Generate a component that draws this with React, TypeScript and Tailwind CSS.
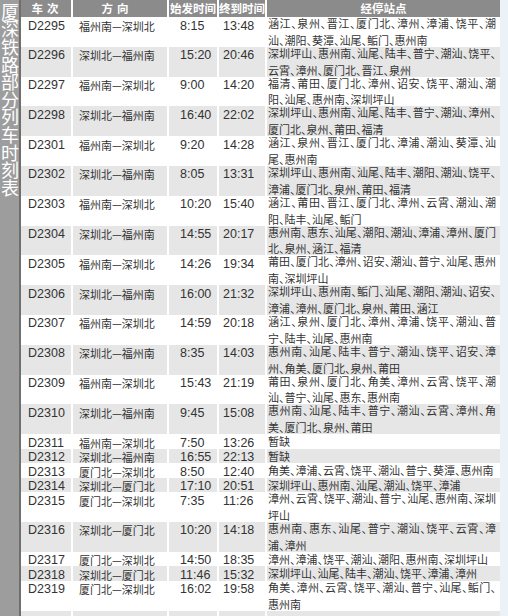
import React from "react";

type Train = [string, string, string, string, string[]];

const trains: Train[] = [
  ["D2295", "福州南—深圳北", "8:15", "13:48", ["涵江、泉州、晋江、厦门北、漳州、漳浦、饶平、潮", "汕、潮阳、葵潭、汕尾、鲘门、惠州南"]],
  ["D2296", "深圳北—福州南", "15:20", "20:46", ["深圳坪山、惠州南、汕尾、陆丰、普宁、潮汕、饶平、", "云霄、漳州、厦门北、晋江、泉州"]],
  ["D2297", "福州南—深圳北", "9:00", "14:20", ["福清、莆田、厦门北、漳州、诏安、饶平、潮汕、潮", "阳、汕尾、惠州南、深圳坪山"]],
  ["D2298", "深圳北—福州南", "16:40", "22:02", ["深圳坪山、惠州南、汕尾、陆丰、普宁、潮汕、漳州、", "厦门北、泉州、莆田、福清"]],
  ["D2301", "福州南—深圳北", "9:20", "14:28", ["涵江、泉州、晋江、厦门北、漳浦、潮汕、葵潭、汕", "尾、惠州南"]],
  ["D2302", "深圳北—福州南", "8:05", "13:31", ["深圳坪山、惠州南、汕尾、陆丰、潮阳、潮汕、饶平、", "漳浦、厦门北、泉州、莆田、福清"]],
  ["D2303", "福州南—深圳北", "10:20", "15:40", ["涵江、莆田、晋江、厦门北、漳州、云霄、潮汕、潮", "阳、陆丰、汕尾、鲘门"]],
  ["D2304", "深圳北—福州南", "14:55", "20:17", ["惠州南、惠东、汕尾、潮阳、潮汕、漳浦、漳州、厦门", "北、泉州、涵江、福清"]],
  ["D2305", "福州南—深圳北", "14:26", "19:34", ["莆田、厦门北、漳州、诏安、潮汕、普宁、汕尾、惠州", "南、深圳坪山"]],
  ["D2306", "深圳北—福州南", "16:00", "21:32", ["深圳坪山、惠州南、鲘门、汕尾、潮阳、潮汕、诏安、", "漳浦、漳州、厦门北、泉州、莆田、涵江"]],
  ["D2307", "福州南—深圳北", "14:59", "20:18", ["涵江、泉州、厦门北、漳州、漳浦、饶平、潮汕、普", "宁、陆丰、汕尾、惠州南"]],
  ["D2308", "深圳北—福州南", "8:35", "14:03", ["惠州南、汕尾、陆丰、普宁、潮汕、饶平、诏安、漳", "州、角美、厦门北、泉州、莆田"]],
  ["D2309", "福州南—深圳北", "15:43", "21:19", ["莆田、泉州、厦门北、角美、漳州、云霄、饶平、潮", "汕、普宁、汕尾、惠东、惠州南"]],
  ["D2310", "深圳北—福州南", "9:45", "15:08", ["惠州南、汕尾、陆丰、普宁、潮汕、云霄、漳州、角", "美、厦门北、泉州、莆田"]],
  ["D2311", "福州南—深圳北", "7:50", "13:26", ["暂缺"]],
  ["D2312", "深圳北—福州南", "16:55", "22:13", ["暂缺"]],
  ["D2313", "厦门北—深圳北", "8:50", "12:40", ["角美、漳浦、云霄、饶平、潮汕、普宁、葵潭、惠州南"]],
  ["D2314", "深圳北—厦门北", "17:10", "20:51", ["深圳坪山、惠州南、汕尾、潮汕、饶平、漳浦"]],
  ["D2315", "厦门北—深圳北", "7:35", "11:26", ["漳州、云霄、饶平、潮汕、普宁、汕尾、惠州南、深圳", "坪山"]],
  ["D2316", "深圳北—厦门北", "10:20", "14:18", ["惠州南、惠东、汕尾、普宁、潮汕、饶平、云霄、漳", "浦、漳州"]],
  ["D2317", "厦门北—深圳北", "14:50", "18:35", ["漳州、漳浦、饶平、潮汕、潮阳、惠州南、深圳坪山"]],
  ["D2318", "深圳北—厦门北", "11:46", "15:32", ["深圳坪山、汕尾、陆丰、潮汕、饶平、漳浦、漳州"]],
  ["D2319", "厦门北—深圳北", "16:02", "19:58", ["角美、漳州、云霄、饶平、潮汕、普宁、汕尾、鲘门、", "惠州南"]],
];

const cols = "grid grid-cols-[50px_94px_48px_46px_233px] gap-x-[2px]";

function Row({ t, i }: { t: Train; i: number }) {
  const bg = i % 2 ? "bg-[#e6e6e6]" : "bg-white";
  const h = t[4].length > 1 ? "h-[29.8px]" : "h-[14.5px]";
  const latin = "font-['Liberation_Sans','Noto_Sans_CJK_SC',sans-serif] text-[12.5px] leading-[13px] pt-[2.5px]";
  return (
    <div className={`${cols} ${h} text-[#333]`}>
      <div className={`${bg} ${latin} pl-[7px]`}>{t[0]}</div>
      <div className={`${bg} pl-[6px] pt-[2.5px] text-[11px] leading-[13px] font-['Noto_Sans_CJK_SC',sans-serif]`}>{t[1]}</div>
      <div className={`${bg} ${latin} pl-[11px]`}>{t[2]}</div>
      <div className={`${bg} ${latin} pl-[4px]`}>{t[3]}</div>
      <div
        className={`${bg} pl-[1px] pr-[4px] flex flex-col gap-[3.8px] text-[11px] leading-[13px] font-['Noto_Sans_CJK_SC',sans-serif] [font-feature-settings:'halt'] ${t[4].length > 1 ? "" : "pt-[1px]"}`}
      >
        {t[4].map((line, k) => (
          <div
            key={k}
            className={`whitespace-nowrap ${k === 0 && t[4].length > 1 ? "text-justify [text-align-last:justify]" : ""}`}
          >
            {line}
          </div>
        ))}
      </div>
    </div>
  );
}

export default function App() {
  const head = "bg-[#8b8b8b] h-[17px] flex items-center justify-center text-white font-bold text-[11.5px] font-['Noto_Sans_CJK_SC',sans-serif]";
  return (
    <div className="w-[508px] h-[616px] overflow-hidden flex bg-[#edf2f6]">
      <div className="w-[19px] shrink-0 bg-[#9d9d9d] flex justify-center pt-[3px] text-white">
        <div className="[writing-mode:vertical-rl] text-[18px] leading-[19px] tracking-[-0.4px] font-['Noto_Sans_CJK_SC',sans-serif]">
          厦深铁路部分列车时刻表
        </div>
      </div>
      <div className="w-[2px] shrink-0 bg-[#6f6f6f]" />
      <div className="w-[479px] shrink-0 bg-white flex flex-col">
        <div className={cols}>
          <div className={`${head} pl-[2px] tracking-[4px]`}>车次</div>
          <div className={`${head} pr-[6px] tracking-[4px]`}>方向</div>
          <div className={head}>始发时间</div>
          <div className={head}>终到时间</div>
          <div className={head}>经停站点</div>
        </div>
        {trains.map((t, i) => (
          <Row key={t[0]} t={t} i={i} />
        ))}
        <div className={`${cols} h-[29.8px]`}>
          <div className="bg-[#e6e6e6]" />
          <div className="bg-[#e6e6e6]" />
          <div className="bg-[#e6e6e6]" />
          <div className="bg-[#e6e6e6]" />
          <div className="bg-[#e6e6e6]" />
        </div>
      </div>
    </div>
  );
}
